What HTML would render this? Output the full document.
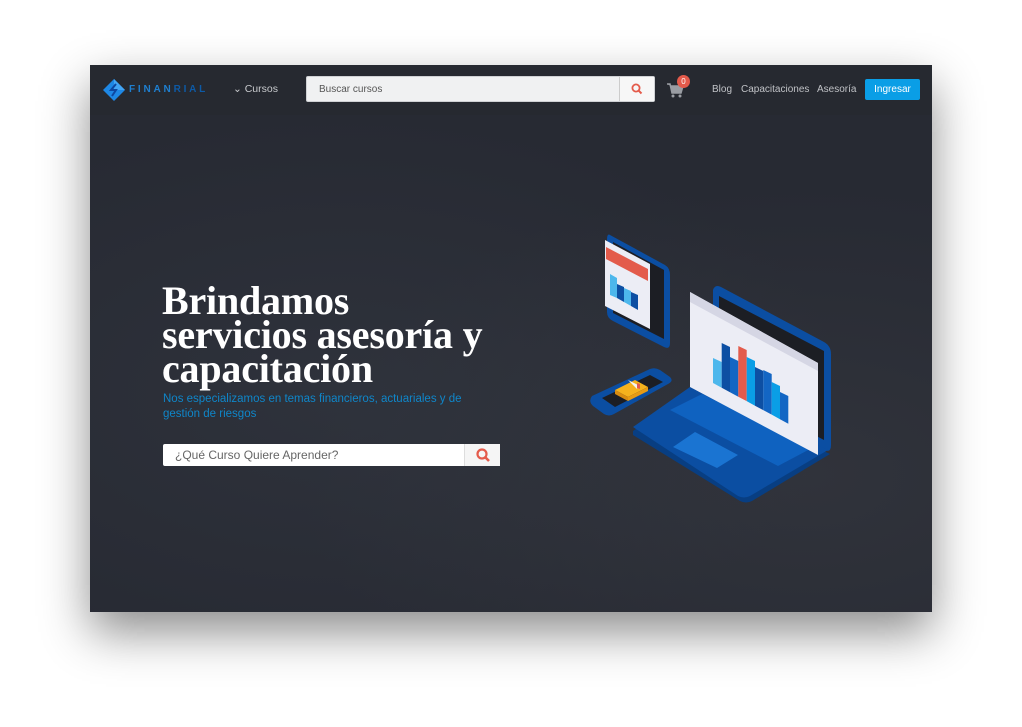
<!DOCTYPE html>
<html><head><meta charset="utf-8"><style>
*{margin:0;padding:0;box-sizing:border-box}
body{width:1022px;height:727px;background:#fff;position:relative;overflow:hidden;font-family:"Liberation Sans",sans-serif}
#shot{position:absolute;left:90px;top:65px;width:842px;height:547px;background:#272a33;box-shadow:0 20px 45px rgba(0,0,0,.45);overflow:hidden}
.bgglow{position:absolute;inset:0;background:radial-gradient(ellipse at 30% 60%,rgba(60,65,75,.35),transparent 60%),radial-gradient(ellipse at 85% 75%,rgba(70,72,78,.3),transparent 50%)}
.nav{position:absolute;left:0;top:0;width:842px;height:50px;background:#262930}
.abs{position:absolute}
.logo{left:12px;top:13px}
.brand{left:39px;top:19px;font-size:10px;letter-spacing:2.8px;color:#1e7fd0;font-weight:bold}
.brand b{color:#0d5aa6}
.cursos{left:143px;top:18px;color:#c8cacd;font-size:10.5px}
.search{left:216px;top:11px;width:349px;height:26px;background:#f0f1f2;border:1px solid #cfd1d4;border-radius:2px}
.search span{position:absolute;left:12px;top:7px;font-size:10px;color:#555}
.search .btn{position:absolute;right:0;top:0;width:35px;height:24px;border-left:1px solid #ccc;background:#f7f7f7}
.links{top:19px;color:#c0c2c6;font-size:10px}
.ing{left:775px;top:14px;width:55px;height:21px;background:#0a9ee6;color:#fff;font-size:10px;text-align:center;line-height:21px;border-radius:2px}
h1{position:absolute;left:72px;top:219px;font-family:"Liberation Serif",serif;font-weight:bold;font-size:40px;line-height:34px;color:#fff;letter-spacing:-.2px}
.sub{left:73px;top:327px;width:330px;color:#0f86c9;font-size:11.5px;line-height:15px}
.hs{left:73px;top:379px;width:337px;height:22px;background:#fff;border-radius:2px}
.hs span{position:absolute;left:12px;top:4px;color:#666;font-size:12px}
.hs .b{position:absolute;right:0;top:0;width:36px;height:22px;border-left:1px solid #ddd;background:#f5f5f5}
</style></head><body>
<div id="shot"><div class="bgglow"></div>
<div class="nav">
<svg class="abs logo" width="24" height="24" viewBox="0 0 24 24"><path d="M12 1 L23 12 L12 23 L1 12Z" fill="#1e88e5"/><path d="M12 1 L23 12 L12 12Z" fill="#42a5f5"/><path d="M14 6 L9 12 L14 12 L10 18" stroke="#0d47a1" stroke-width="2" fill="none"/></svg>
<div class="abs brand">FINAN<b>RIAL</b></div>
<div class="abs cursos">⌄ Cursos</div>
<div class="abs search"><span>Buscar cursos</span><div class="btn"><svg width="35" height="24"><circle cx="16" cy="11" r="3.6" stroke="#e45b4b" stroke-width="1.8" fill="none"/><path d="M18.6 13.6 L21.5 16.5" stroke="#e45b4b" stroke-width="2"/></svg></div></div>
<svg class="abs" style="left:576px;top:16px" width="20" height="18"><path d="M1 3 H4 L6 12 H15 L17 5 H5" fill="#9a9da3" stroke="#9a9da3" stroke-width="1.5"/><circle cx="7" cy="15" r="1.5" fill="#9a9da3"/><circle cx="14" cy="15" r="1.5" fill="#9a9da3"/></svg>
<div class="abs" style="left:587px;top:10px;width:13px;height:13px;border-radius:50%;background:#e35a4b;color:#fff;font-size:8px;text-align:center;line-height:13px">0</div>
<div class="abs links" style="left:622px">Blog</div>
<div class="abs links" style="left:651px">Capacitaciones</div>
<div class="abs links" style="left:727px">Asesoría</div>
<div class="abs ing">Ingresar</div>
</div>
<h1>Brindamos<br>servicios asesoría y<br>capacitación</h1>
<div class="abs sub">Nos especializamos en temas financieros, actuariales y de gestión de riesgos</div>
<div class="abs hs"><span>¿Qué Curso Quiere Aprender?</span><div class="b"><svg width="36" height="22"><circle cx="17" cy="10" r="4.5" stroke="#e45b4b" stroke-width="2.2" fill="none"/><path d="M20 13 L24 17" stroke="#e45b4b" stroke-width="2.6"/></svg></div></div>
<svg class="abs" style="left:490px;top:155px" width="270" height="290" viewBox="0 0 270 290">
<!-- tablet -->
<path d="M30 15 L85 45 Q90 48 90 55 L90 123 Q90 130 84 127 L33 101 Q27 98 27 92 L27 20 Q27 13 30 15Z" fill="#0b4ea2"/>
<path d="M33 22 L84 50 L84 119 L33 93Z" fill="#1c1e24"/>
<path d="M25 20 L70 44 L70 109 L25 86Z" fill="#ecedf5"/>
<path d="M26 27 L68 49 L68 61 L26 39Z" fill="#e35b4b"/>
<path d="M30 54 L37 58 L37 78 L30 75Z" fill="#4db7ec"/><path d="M37 64 L44 67 L44 82 L37 78Z" fill="#0d4fa3"/><path d="M44 68 L51 71 L51 86 L44 82Z" fill="#4db7ec"/><path d="M51 72 L58 75 L58 90 L51 86Z" fill="#0d4fa3"/>
<!-- phone -->
<path d="M12 176 L70 149 Q75 147 80 150 L90 157 Q94 161 88 164 L34 194 Q29 197 24 194 L13 186 Q8 181 12 176Z" fill="#0b4ea2"/>
<path d="M22 178 L70 155 L83 162 L35 187Z" fill="#1c1e24"/>
<path d="M35 170 L55 160 L68 167 L48 177Z" fill="#f5b21d"/><path d="M35 170 L48 177 L48 181 L35 174Z" fill="#d98c10"/><path d="M48 177 L68 167 L68 171 L48 181Z" fill="#e79b14"/>
<path d="M48 160 L58 165 L57 169 Z" fill="#f4f4f4"/><path d="M57 163 L60 164 L60 169 L57 168Z" fill="#e35b4b"/>
<!-- laptop screen back -->
<path d="M133 70 Q135 64 141 67 L244 122 Q251 126 251 134 L251 225 Q251 233 245 230 L133 170Z" fill="#0b4ea2"/>
<path d="M139 76 L244 131 L244 220 L139 165Z" fill="#1c1e24"/>
<!-- base -->
<path d="M53 211 L110 171 L250 234 L172 281 Q166 284 160 281 L53 215Z" fill="#083e82"/>
<path d="M53 207 L110 167 L248 230 L170 276 Q164 279 158 276 Z" fill="#0b4ea2"/>
<path d="M90 190 L122 174 L232 228 L198 246Z" fill="#0f62c0"/>
<path d="M93 227 L115 212 L158 235 L137 248Z" fill="#1a74d2"/>
<!-- screen panel -->
<path d="M110 72 L238 143 L238 235 L110 167Z" fill="#ecedf5"/>
<path d="M110 72 L238 143 L238 151 L110 82Z" fill="#d5d6e4"/>
<path d="M133 138 L141.7 142 L141.7 167.7 L133 163Z" fill="#4db7ec"/>
<path d="M141.7 123 L150 127 L150 172.2 L141.7 167.7Z" fill="#0d4fa3"/>
<path d="M150 137 L158.3 141 L158.3 176.7 L150 172.2Z" fill="#1366c4"/>
<path d="M158.3 126 L166.7 130 L166.7 181.1 L158.3 176.7Z" fill="#e35b4b"/>
<path d="M166.7 137 L175 141 L175 185.7 L166.7 181.1Z" fill="#0a9ee6"/>
<path d="M175 147 L183.3 151 L183.3 190.1 L175 185.7Z" fill="#0d4fa3"/>
<path d="M183.3 150 L191.7 154 L191.7 194.6 L183.3 190.1Z" fill="#1366c4"/>
<path d="M191.7 162 L200 166 L200 199.2 L191.7 194.6Z" fill="#0a9ee6"/>
<path d="M200 172 L208.3 176 L208.3 203.7 L200 199.2Z" fill="#1366c4"/>
</svg>
</div>
</body></html>
